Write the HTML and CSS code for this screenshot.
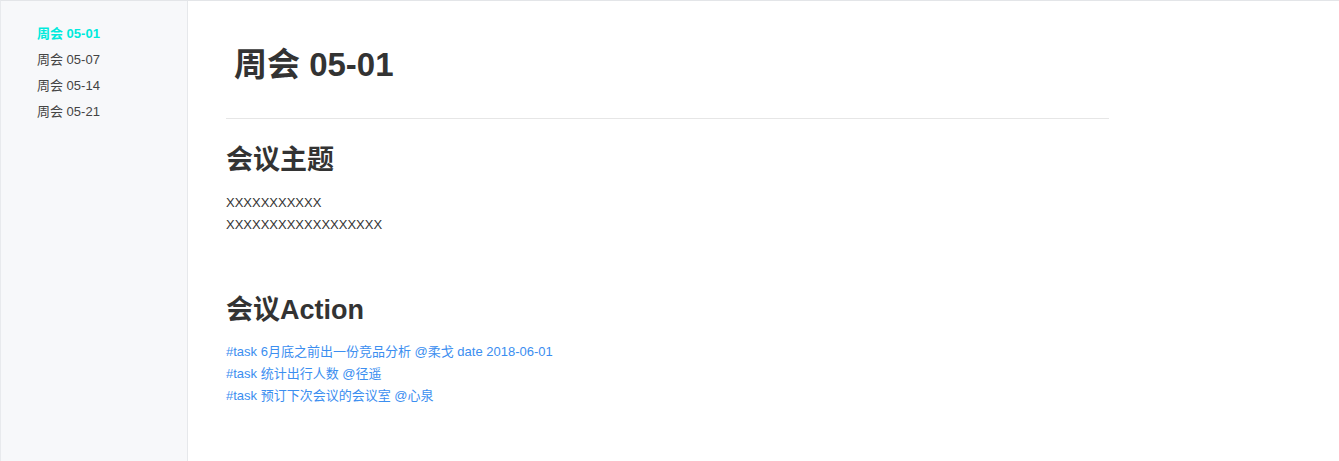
FILE: index.html
```html
<!DOCTYPE html>
<html lang="zh-CN">
<head>
  <meta charset="UTF-8">
  <meta name="viewport" content="width=device-width, initial-scale=1">
  <title>周会 05-01</title>
  <link rel="stylesheet" href="styles.css">
</head>
<body>
  <div class="page">
    <nav class="sidebar">
      <a class="nav-item active" href="#">周会 05-01</a>
      <a class="nav-item" href="#">周会 05-07</a>
      <a class="nav-item" href="#">周会 05-14</a>
      <a class="nav-item" href="#">周会 05-21</a>
    </nav>

    <main class="content">
      <div class="doc-header">
        <h1>周会 05-01</h1>
      </div>

      <h2>会议主题</h2>
      <p class="text">XXXXXXXXXXX<br>XXXXXXXXXXXXXXXXXX</p>

      <h2 class="section-gap">会议Action</h2>
      <ul class="tasks">
        <li><a href="#">#task 6月底之前出一份竞品分析 @柔戈 date 2018-06-01</a></li>
        <li><a href="#">#task 统计出行人数 @径遥</a></li>
        <li><a href="#">#task 预订下次会议的会议室 @心泉</a></li>
      </ul>
    </main>
  </div>
</body>
</html>
```

FILE: styles.css
```css
html, body { margin: 0; height: 100%; background: #fff; }
body { font-family: "Liberation Sans", Arial, "Noto Sans CJK SC", sans-serif; color: #333; }

.page { display: flex; min-height: 100%; box-sizing: border-box; border-top: 1px solid #e3e5e8; border-left: 1px solid #e8eaed; }

.sidebar { width: 187px; flex-shrink: 0; background: #f7f8fa; border-right: 1px solid #e6e8eb; padding: 20px 0 0 36px; box-sizing: border-box; display: flex; flex-direction: column; }
.nav-item { font-size: 13px; line-height: 26px; color: #444; text-decoration: none; }
.nav-item.active { color: #00eadc; font-weight: 600; }

.content { width: 921px; padding: 44px 0 0 38px; box-sizing: border-box; }

.doc-header { border-bottom: 1px solid #e6e6e6; padding: 0 0 33px 8px; }
h1 { margin: 0; font-size: 33px; line-height: 40px; font-weight: bold; color: #333; }

h2 { margin: 23px 0 14px; font-size: 27px; line-height: 36px; font-weight: 600; color: #333; }
h2.section-gap { margin-top: 56px; margin-bottom: 13px; }

.text { margin: 0; font-size: 13px; line-height: 22px; color: #333; }

.tasks { list-style: none; margin: 0; padding: 0; }
.tasks li { font-size: 13px; line-height: 22px; }
.tasks a { color: #3b8ef0; text-decoration: none; }
```
